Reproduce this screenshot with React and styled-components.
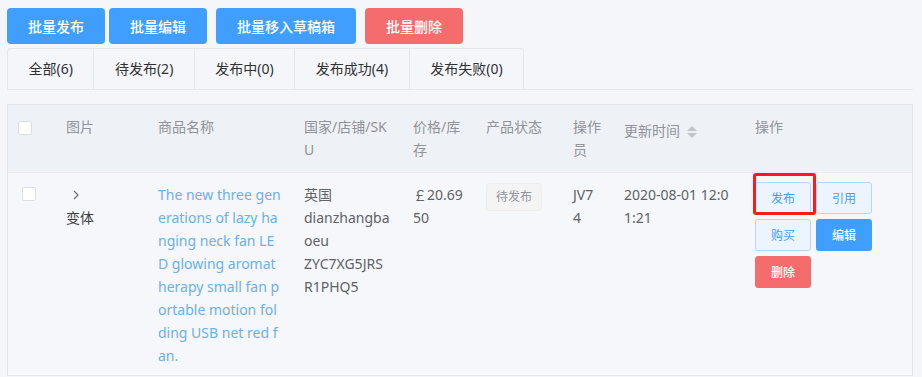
import styled, { createGlobalStyle, css } from "styled-components";

const GlobalStyle = createGlobalStyle`
  body {
    margin: 0;
    background: #f4f6fa;
    font-family: "Noto Sans", "Noto Sans CJK SC", sans-serif;
    font-size: 14px;
    color: #606266;
  }
`;

const Page = styled.div`
  padding: 8px 9px 0 7px;
`;

const Toolbar = styled.div`
  display: flex;
  height: 36px;
`;

const BulkButton = styled.button`
  height: 36px;
  padding: 0 21px;
  margin-left: ${(p) => p.$ml || 0}px;
  border: none;
  border-radius: 4px;
  background: ${(p) => (p.$danger ? "#f56c6c" : "#409eff")};
  color: #fff;
  font-family: inherit;
  font-size: 14px;
  font-weight: 500;
  cursor: pointer;
`;

const TabBar = styled.div`
  margin-top: 4px;
  display: flex;
  border-bottom: 1px solid #e4e7ed;
`;

const Tabs = styled.ul`
  display: flex;
  margin: 0;
  padding: 0;
  list-style: none;
  border: 1px solid #e4e7ed;
  border-bottom: none;
  border-radius: 4px 4px 0 0;
`;

const Tab = styled.li`
  height: 40px;
  line-height: 40px;
  padding: 0 20.5px;
  color: #303133;
  border-left: 1px solid #e4e7ed;
  &:first-child {
    border-left: none;
  }
`;

const Table = styled.div`
  margin-top: 14px;
  border: 1px solid #e1e5ec;
  border-bottom-color: #e6e8ee;
`;

const Row = styled.div`
  display: grid;
  grid-template-columns: 48px 92px 146px 109px 73px 87px 51px 131px 1fr;
  ${(p) =>
    p.$head
      ? css`
          background: #eef1f6;
          color: #909399;
          min-height: 67px;
        `
      : css`
          background: #f5f7fb;
          border-top: 1px solid #e9ecf2;
          min-height: 202px;
        `}
`;

const Cell = styled.div`
  padding: 10px ${(p) => p.$pr ?? 10}px 0 10px;
  line-height: 23px;
  word-break: break-all;
`;

const CheckCell = styled.div`
  padding: ${(p) => (p.$head ? "16px 0 0 10px" : "14px 0 0 14px")};
`;

const Checkbox = styled.span`
  display: block;
  width: 12px;
  height: 12px;
  background: #fff;
  border: 1px solid #dcdfe6;
  border-radius: 2px;
`;

const Expand = styled.div`
  height: 23px;
  display: flex;
  align-items: center;
  padding-left: 7px;
`;

const Variant = styled.div`
  color: #3a3c40;
`;

const NameLink = styled.div`
  color: #6cb0e8;
`;

const SortCaret = styled.span`
  display: inline-flex;
  flex-direction: column;
  gap: 2px;
  margin-left: 7px;
  vertical-align: middle;
  &::before,
  &::after {
    content: "";
    border-left: 5px solid transparent;
    border-right: 5px solid transparent;
  }
  &::before {
    border-bottom: 5px solid #c0c4cc;
  }
  &::after {
    border-top: 5px solid #c0c4cc;
  }
`;

const TimeHead = styled.div`
  padding: 14px 10px 0 10px;
  line-height: 23px;
`;

const Tag = styled.span`
  display: inline-block;
  height: 26px;
  line-height: 26px;
  padding: 0 9px;
  font-size: 12px;
  color: #909399;
  background: #f4f4f5;
  border: 1px solid #eeeef0;
  border-radius: 4px;
`;

const Actions = styled.div`
  padding: 9px 0 0 10px;
  display: grid;
  grid-template-columns: 56px 56px;
  grid-auto-rows: 32px;
  gap: 5px;
  align-content: start;
`;

const ActionButton = styled.button`
  position: relative;
  width: 56px;
  height: 32px;
  padding: 0;
  border-radius: 3px;
  font-family: inherit;
  font-size: 12px;
  cursor: pointer;
  ${(p) =>
    p.$variant === "primary"
      ? css`
          background: #409eff;
          border: 1px solid #409eff;
          color: #fff;
          font-weight: 500;
        `
      : p.$variant === "danger"
      ? css`
          background: #f56c6c;
          border: 1px solid #f56c6c;
          color: #fff;
          font-weight: 500;
        `
      : css`
          background: #ecf5ff;
          border: 1px solid #b3d8ff;
          color: #409eff;
        `}
  ${(p) =>
    p.$marked &&
    css`
      &::after {
        content: "";
        position: absolute;
        top: -10px;
        left: -3px;
        right: -6px;
        bottom: -2px;
        border: 3px solid #ff1a1a;
        border-radius: 3px;
      }
    `}
`;

const tabs = ["全部(6)", "待发布(2)", "发布中(0)", "发布成功(4)", "发布失败(0)"];

const Chevron = () => (
  <svg width="6" height="10" viewBox="0 0 6 10">
    <polyline
      points="1,1 5,5 1,9"
      fill="none"
      stroke="#6b7079"
      strokeWidth="1.2"
    />
  </svg>
);

export default function App() {
  return (
    <Page>
      <GlobalStyle />
      <Toolbar>
        <BulkButton>批量发布</BulkButton>
        <BulkButton $ml={4}>批量编辑</BulkButton>
        <BulkButton $ml={9}>批量移入草稿箱</BulkButton>
        <BulkButton $ml={9} $danger>
          批量删除
        </BulkButton>
      </Toolbar>
      <TabBar>
        <Tabs>
          {tabs.map((t) => (
            <Tab key={t}>{t}</Tab>
          ))}
        </Tabs>
      </TabBar>
      <Table>
        <Row $head>
          <CheckCell $head>
            <Checkbox />
          </CheckCell>
          <Cell>图片</Cell>
          <Cell>商品名称</Cell>
          <Cell $pr={13}>国家/店铺/SKU</Cell>
          <Cell>价格/库存</Cell>
          <Cell>产品状态</Cell>
          <Cell $pr={13}>操作员</Cell>
          <TimeHead>
            更新时间
            <SortCaret />
          </TimeHead>
          <Cell>操作</Cell>
        </Row>
        <Row>
          <CheckCell>
            <Checkbox />
          </CheckCell>
          <Cell>
            <Expand>
              <Chevron />
            </Expand>
            <Variant>变体</Variant>
          </Cell>
          <Cell>
            <NameLink>
              The new three generations of lazy hanging neck fan LED glowing
              aromatherapy small fan portable motion folding USB net red fan.
            </NameLink>
          </Cell>
          <Cell $pr={13}>
            英国
            <br />
            dianzhangbaoeu
            <br />
            ZYC7XG5JRSR1PHQ5
          </Cell>
          <Cell>￡20.6950</Cell>
          <Cell>
            <Tag>待发布</Tag>
          </Cell>
          <Cell $pr={13}>JV74</Cell>
          <Cell>2020-08-01 12:01:21</Cell>
          <Actions>
            <ActionButton $marked>发布</ActionButton>
            <ActionButton>引用</ActionButton>
            <ActionButton>购买</ActionButton>
            <ActionButton $variant="primary">编辑</ActionButton>
            <ActionButton $variant="danger">删除</ActionButton>
          </Actions>
        </Row>
      </Table>
    </Page>
  );
}
